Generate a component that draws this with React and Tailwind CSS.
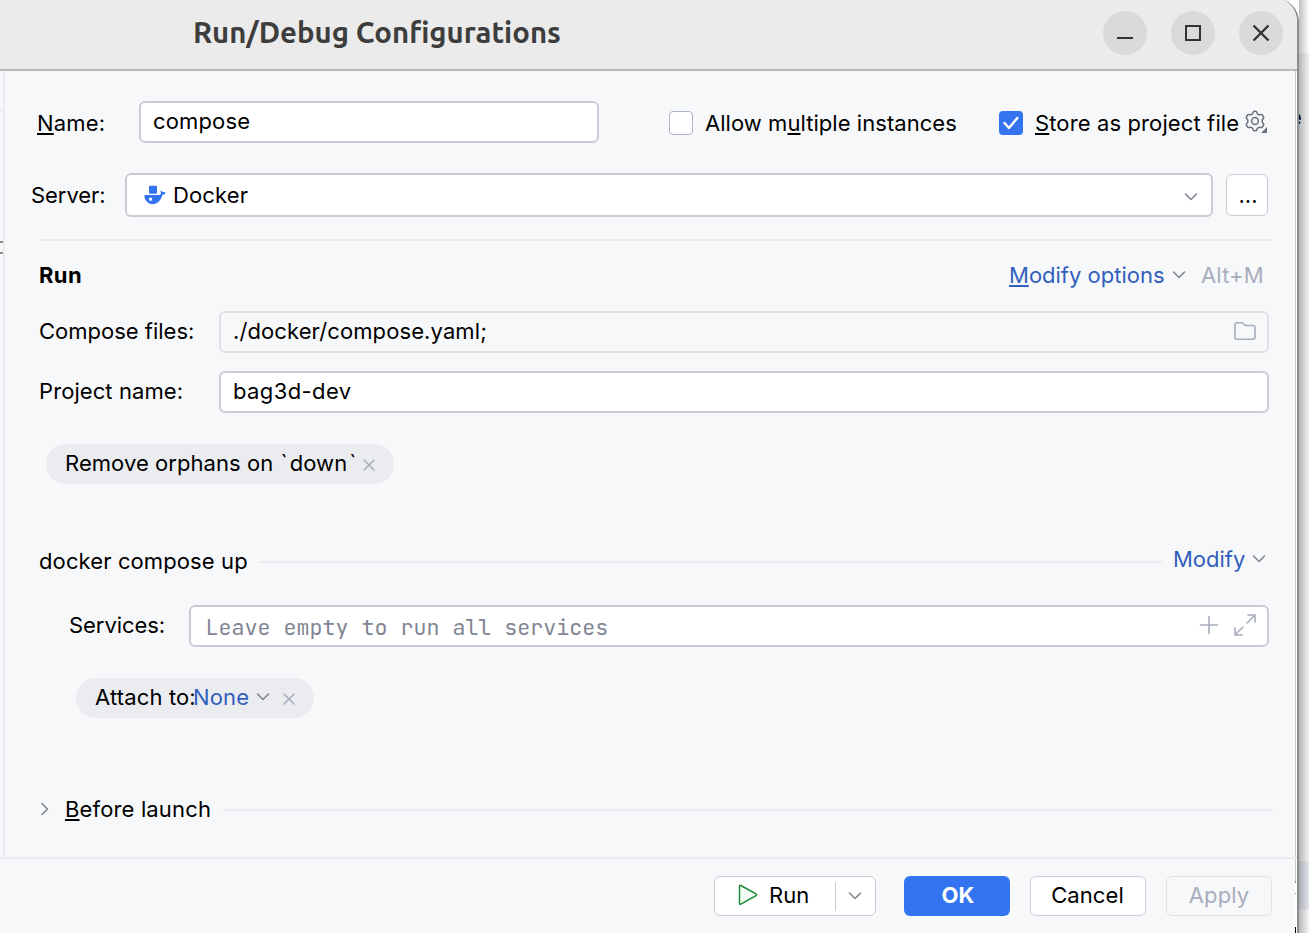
import React from "react";

function Chevron({ className = "" }) {
  return (
    <svg className={"shrink-0 " + className} width="14" height="10" viewBox="0 0 14 10" fill="none">
      <path d="M1.5 2 L7 7.5 L12.5 2" stroke="#818594" strokeWidth="1.6" strokeLinecap="round" strokeLinejoin="round" />
    </svg>
  );
}

function Cross({ className = "" }) {
  return (
    <svg className={"shrink-0 " + className} width="12" height="12" viewBox="0 0 12 12" fill="none">
      <path d="M1 1 L11 11 M11 1 L1 11" stroke="#A8ADBD" strokeWidth="1.5" strokeLinecap="round" />
    </svg>
  );
}

function Mnemonic({ children }) {
  return <span className="underline decoration-2 underline-offset-[2px] [text-decoration-skip-ink:none]">{children}</span>;
}

function WindowButton({ children, className = "" }) {
  return (
    <div className={"flex h-11 w-11 shrink-0 items-center justify-center rounded-full bg-[#dadada] " + className}>
      <svg width="20" height="20" viewBox="0 0 20 20" fill="none" stroke="#333" strokeWidth="2">
        {children}
      </svg>
    </div>
  );
}

function TitleBar() {
  return (
    <div className="flex h-[73px] shrink-0 items-start border-b-2 border-[#b8b8b8] bg-[#ebebeb] pt-[13px]">
      <h1 className="ml-[193px] mt-1 w-[910px] text-[29.33px] leading-[36px] font-bold text-[#3d3d3d] [font-family:Ubuntu,'Noto_Sans',sans-serif]">
        Run/Debug Configurations
      </h1>
      <WindowButton><path d="M2 15H18" /></WindowButton>
      <WindowButton className="ml-6"><path d="M3 3H17V17H3Z" /></WindowButton>
      <WindowButton className="ml-6"><path d="M2.5 2.5L17.5 17.5M17.5 2.5L2.5 17.5" strokeWidth="2.4" /></WindowButton>
    </div>
  );
}

function DockerIcon() {
  return (
    <svg className="mr-[7px] ml-px shrink-0" width="22" height="20" viewBox="0 0 22 20">
      <rect x="5" y="0.8" width="8" height="8" rx="1" fill="#3574F0" />
      <path fillRule="evenodd" fill="#3574F0" d="M0.9 10H14.8C16.2 10 17 9.2 17 8.3C16.5 7.4 16.4 6.4 16.9 5.4C17.9 5.8 18.5 6.4 18.8 7.2C19.8 6.9 20.8 7.2 21.8 7.8C21 9 20 9.8 18.4 9.9C17.2 14.5 14 19 8.7 19C3.7 19 0.4 15 0.4 10.4Q0.4 10 0.9 10Z M6.6 12.6A1.6 1.6 0 1 0 6.6 15.8A1.6 1.6 0 1 0 6.6 12.6Z" />
    </svg>
  );
}

function GearIcon() {
  return (
    <svg className="ml-[4px] shrink-0" width="24" height="24" viewBox="0 0 24 24" fill="none">
      <path
        d="M9.1 2.2 Q9.4 1.2 10.3 1.2 H11.7 Q12.6 1.2 12.9 2.2 L13.4 3.7 Q14.3 4.7 15.5 4.8 L17.1 4.5 Q18 4.3 18.5 5.1 L19.6 7 Q20.1 7.8 19.4 8.5 L18.4 9.6 Q17.9 11 18.4 12.4 L19.4 13.5 Q20.1 14.2 19.6 15 L18.5 16.9 Q18 17.7 17.1 17.5 L15.5 17.2 Q14.3 17.3 13.4 18.3 L12.9 19.8 Q12.6 20.8 11.7 20.8 H10.3 Q9.4 20.8 9.1 19.8 L8.6 18.3 Q7.7 17.3 6.5 17.2 L4.9 17.5 Q4 17.7 3.5 16.9 L2.4 15 Q1.9 14.2 2.6 13.5 L3.6 12.4 Q4.1 11 3.6 9.6 L2.6 8.5 Q1.9 7.8 2.4 7 L3.5 5.1 Q4 4.3 4.9 4.5 L6.5 4.8 Q7.7 4.7 8.6 3.7 Z"
        stroke="#6C707E" strokeWidth="1.5" strokeLinejoin="round"
      />
      <circle cx="11" cy="11" r="3.4" stroke="#6C707E" strokeWidth="1.5" />
      <path d="M17 23 H23 V17 Z" fill="#6C707E" />
    </svg>
  );
}

function Form() {
  return (
    <main className="flex min-w-0 flex-1 flex-col">
      <div className="mt-[30px] flex h-[42px] shrink-0 items-center">
        <label className="ml-8 mt-[2px] w-[102px] tracking-[0.15px]"><Mnemonic>N</Mnemonic>ame:</label>
        <div className="flex h-[42px] w-[460px] items-center rounded-[6px] border-2 border-[#c9ccd6] bg-white pb-[2px] pl-3 tracking-[0.14px]">compose</div>
        <span className="ml-[70px] mt-[2px] h-6 w-6 rounded-[4px] border-[1.5px] border-[#b0b4c4] bg-white" />
        <label className="ml-3 mt-[2px] w-[294px] tracking-[0.05px]">Allow m<Mnemonic>u</Mnemonic>ltiple instances</label>
        <span className="mt-[2px] flex h-6 w-6 items-center justify-center rounded-[4px] bg-[#3574F0]">
          <svg width="18" height="16" viewBox="0 0 18 16" fill="none">
            <path d="M2.5 8 L7 13 L15.3 3" stroke="#fff" strokeWidth="2.4" strokeLinecap="round" strokeLinejoin="round" />
          </svg>
        </span>
        <label className="ml-3 mt-[2px] w-[205px] whitespace-nowrap tracking-[0.12px]"><Mnemonic>S</Mnemonic>tore as project file</label>
        <GearIcon />
      </div>

      <div className="mt-[30px] flex h-11 shrink-0 items-center">
        <label className="ml-[26px] w-[94px] tracking-[-0.05px]">Server:</label>
        <div className="flex h-11 w-[1088px] items-center rounded-[6px] border-2 border-[#c9ccd6] bg-white pl-[16px] pr-[13px]">
          <DockerIcon />
          <span className="flex-1 tracking-[0.15px]">Docker</span>
          <Chevron className="mt-1" />
        </div>
        <button className="ml-[13px] flex h-[42px] w-[42px] items-center justify-center rounded-[6px] border-[1.5px] border-[#c9ccd6] bg-white pl-[2px]">...</button>
      </div>

      <div className="ml-[34px] mr-[23px] mt-[22px] h-[2px] shrink-0 bg-[#ebecf0]" />

      <div className="mt-4 flex h-9 shrink-0 items-center pl-[34px]">
        <h2 className="w-[970px] font-bold tracking-[0.4px]">Run</h2>
        <a className="w-[156px] text-[#315FBD]"><Mnemonic>M</Mnemonic>odify options</a>
        <Chevron className="ml-[7px]" />
        <span className="ml-[15px] tracking-[0.15px] text-[#A8ADBD]">Alt+M</span>
      </div>

      <div className="mt-[18px] flex h-[42px] shrink-0 items-center pl-[34px]">
        <label className="w-[180px] pb-[2px]">Compose files:</label>
        <div className="flex h-[42px] w-[1050px] items-center rounded-[6px] border-2 border-[#dfe1e5] pb-[2px] pl-3 pr-[11px]">
          <span className="flex-1 tracking-[0.1px]">./docker/compose.yaml;</span>
          <svg width="22" height="20" viewBox="0 0 22 20" fill="none">
            <path d="M1 4 Q1 1.8 3.2 1.8 H7.6 Q8.3 1.8 8.8 2.3 L11.4 4.5 H18.8 Q21 4.5 21 6.7 V16 Q21 18.2 18.8 18.2 H3.2 Q1 18.2 1 16 Z" stroke="#A8ADBD" strokeWidth="1.6" />
          </svg>
        </div>
      </div>

      <div className="mt-[18px] flex h-[42px] shrink-0 items-center pl-[34px]">
        <label className="w-[180px] pb-[2px] tracking-[0.08px]">Project name:</label>
        <div className="flex h-[42px] w-[1050px] items-center rounded-[6px] border-2 border-[#c9ccd6] bg-white pb-[2px] pl-3 tracking-[0.4px]">bag3d-dev</div>
      </div>

      <div className="ml-[41px] mt-[31px] flex h-10 w-[348px] shrink-0 items-center rounded-full bg-[#ebecf0] pl-[19px]">
        <span className="w-[298px] whitespace-nowrap pb-[2px] tracking-[0.06px]">
          Remove orphans on <span className="pl-[1px] pr-[2px]">`</span>down<span className="pl-[2px]">`</span>
        </span>
        <Cross className="mt-[2px]" />
      </div>

      <div className="mt-[57px] flex h-10 shrink-0 items-center pl-[34px]">
        <span className="w-[208px] whitespace-nowrap tracking-[0.11px]">docker compose up</span>
        <span className="ml-3 mt-[2px] h-[2px] w-[903px] bg-[#ebecf0]" />
        <a className="ml-[11px] w-[73px] pb-1 text-[#315FBD]">Modify</a>
        <Chevron className="mb-1 ml-[6px]" />
      </div>

      <div className="mt-6 flex h-[42px] shrink-0 items-center pl-16">
        <label className="w-[120px] pb-[2px] tracking-[-0.05px]">Services:</label>
        <div className="flex h-[42px] w-[1080px] items-center rounded-[6px] border-2 border-[#c9ccd6] bg-white pl-[14.5px] pr-[11px]">
          <span className="flex-1 pt-1 text-[21.67px] text-[#818594] [font-family:'JetBrains_Mono','DejaVu_Sans_Mono',monospace]">Leave empty to run all services</span>
          <svg className="mb-[2px] mr-[15px]" width="20" height="20" viewBox="0 0 20 20" fill="none" stroke="#A8ADBD" strokeWidth="1.6" strokeLinecap="round">
            <path d="M10 1.5V18.5M1.5 10H18.5" />
          </svg>
          <svg className="mb-[2px]" width="22" height="22" viewBox="0 0 22 22" fill="none" stroke="#A8ADBD" strokeWidth="1.6" strokeLinecap="round" strokeLinejoin="round">
            <path d="M14 1H21V8M21 1L13 9M1 14V21H8M1 21L9 13" />
          </svg>
        </div>
      </div>

      <div className="ml-[71px] mt-[31px] flex h-10 w-[238px] shrink-0 items-center rounded-full bg-[#ebecf0] pl-[19px]">
        <span className="w-[98px] whitespace-nowrap pb-[2px] tracking-[0.15px]">Attach to:</span>
        <a className="w-[57px] pb-[2px] tracking-[0.15px] text-[#315FBD]">None</a>
        <Chevron className="mb-[2px] ml-[6px]" />
        <Cross className="ml-[13px] mt-[2px]" />
      </div>

      <div className="mt-[71px] flex h-10 shrink-0 items-center pl-[34px]">
        <svg className="mr-[13px]" width="13" height="14" viewBox="0 0 13 14" fill="none">
          <path d="M3 1.5 L8.5 7 L3 12.5" stroke="#818594" strokeWidth="1.6" strokeLinecap="round" strokeLinejoin="round" />
        </svg>
        <span className="w-[146px] whitespace-nowrap tracking-[0.15px]"><Mnemonic>B</Mnemonic>efore launch</span>
        <span className="ml-3 mt-[2px] h-[2px] w-[1050px] bg-[#ebecf0]" />
      </div>
    </main>
  );
}

function Footer() {
  return (
    <footer className="flex h-[76px] shrink-0 border-t-2 border-[#ebecf0] pl-[714px]">
      <button className="mt-[17px] flex h-10 w-[162px] items-center rounded-[6px] border-[1.5px] border-[#c9ccd6] bg-white pl-[23px]">
        <svg className="mb-[2px]" width="20" height="22" viewBox="0 0 20 22">
          <path d="M1.5 2.3V19.3Q1.5 20.8 2.9 20.1L18 11.7Q19 10.8 18 9.9L2.9 1.5Q1.5 .8 1.5 2.3Z" fill="#F2FCF3" stroke="#208A3C" strokeWidth="1.5" />
        </svg>
        <span className="ml-[11px] w-[66px] pb-[2px] text-left">Run</span>
        <span className="h-[29px] w-px bg-[#c9ccd6]" />
        <Chevron className="ml-[12px]" />
      </button>
      <button className="ml-7 mt-[17px] h-10 w-[106px] rounded-[6px] bg-[#3574F0] pb-[2px] pl-[2px] font-bold text-white">OK</button>
      <button className="ml-5 mt-[17px] h-10 w-[116px] rounded-[6px] border-[1.5px] border-[#c9ccd6] bg-white pb-[2px] pr-px tracking-[0.1px]">Cancel</button>
      <button className="ml-5 mt-[17px] h-10 w-[106px] rounded-[6px] border-[1.5px] border-[#dfe1e5] pb-[2px] tracking-[0.1px] text-[#A8ADBD]">Apply</button>
      <div className="ml-auto flex w-[2px] flex-col bg-white">
        <span className="h-[22px] w-px bg-[#c9c9c9]" />
        <span className="h-[2px] w-px bg-[#888]" />
        <span className="mt-[10px] h-[1px] w-px bg-[#888]" />
        <span className="mt-auto h-[6px] w-px bg-black" />
      </div>
    </footer>
  );
}

function BackgroundEdge() {
  return (
    <div className="absolute inset-y-0 right-0 flex w-6 flex-col overflow-hidden">
      <div className="h-[53px] bg-white" />
      <div className="flex h-[808px] flex-col bg-[#f2f2f2]">
        <span className="mt-[51px] pl-[4px] text-[22px] leading-[26px]">e</span>
      </div>
      <div className="h-12 bg-[#e2e5ee]" />
      <div className="flex-1 bg-[#f5f5f5]" />
      <div className="absolute inset-y-0 right-0 w-[10px] bg-linear-to-r from-black/25 to-transparent" />
    </div>
  );
}

export default function App() {
  return (
    <div className="relative h-[933px] w-[1309px] overflow-hidden bg-[#f0f0f0] text-[22px] leading-[26px] text-black [font-family:Inter,sans-serif]">
      <BackgroundEdge />
      <div className="relative -mt-[2px] flex h-[935px] w-[1299px] flex-col overflow-hidden rounded-tr-[24px] border-r-2 border-[#8c8c8c] bg-[#f7f8fa]">
        <TitleBar />
        <div className="flex h-[786px] shrink-0">
          <aside className="flex w-[5px] shrink-0 flex-col border-r-2 border-[#ebecf0]">
            <span className="mt-[38px] h-[2px] bg-[#ebecf0]" />
            <span className="mt-[130px] h-[13px] border-y-2 border-[#8a8a8a]" />
          </aside>
          <Form />
          <div className="w-[2px] border-l border-[#c9c9c9] bg-white" />
        </div>
        <Footer />
      </div>
    </div>
  );
}
